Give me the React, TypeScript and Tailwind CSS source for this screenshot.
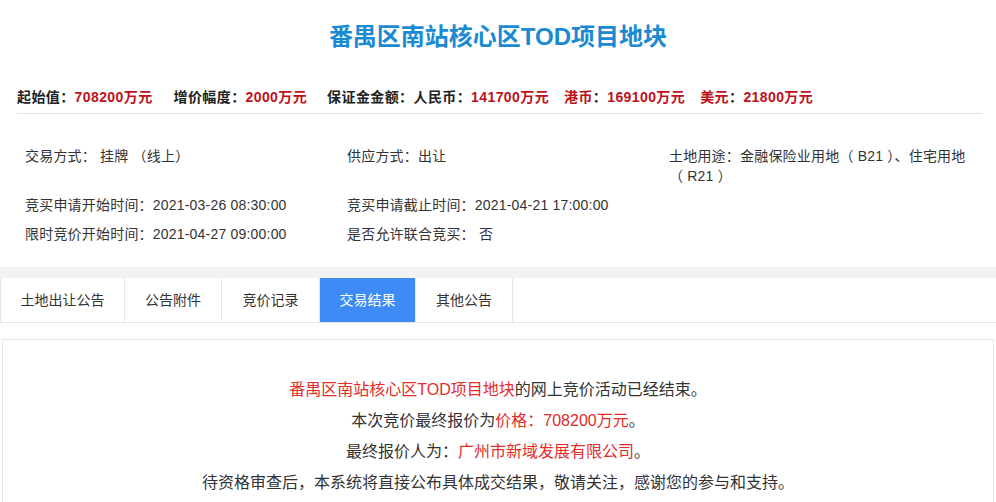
import React from "react";

const font = { fontFamily: '"Liberation Sans","Noto Sans CJK SC",sans-serif' };

function Info({ label, value, className = "" }: { label: string; value: string; className?: string }) {
  return (
    <span className={className}>
      <span className="text-[#222]">{label}：</span>
      <span className="text-[#c0101a]">{value}</span>
    </span>
  );
}

export default function App() {
  const tabs = ["土地出让公告", "公告附件", "竞价记录", "交易结果", "其他公告"];
  const widths = ["w-[125px]", "w-[97px]", "w-[98px]", "w-[96px]", "w-[97px]"];
  return (
    <div className="w-[996px] bg-white text-[#333]" style={font}>
      <div className="h-[74px] flex items-center justify-center">
        <h1 className="text-[24px] font-bold text-[#1a8ad2] leading-[32px]">番禺区南站核心区TOD项目地块</h1>
      </div>
      <div className="ml-[17px] mr-[14px] pt-[13px] pb-[6px] border-b border-[#e2e2e2] text-[14px] font-bold leading-[20px] tracking-[0.4px] flex">
        <Info label="起始值" value="708200万元" className="mr-[21px]" />
        <Info label="增价幅度" value="2000万元" className="mr-[20px]" />
        <span className="text-[#222]">保证金金额：</span>
        <Info label="人民币" value="141700万元" className="mr-[15px]" />
        <span className="mr-[15px] text-[#c0101a]">港币<span className="text-[#222]">：</span>169100万元</span>
        <span className="text-[#c0101a]">美元<span className="text-[#222]">：</span>21800万元</span>
      </div>
      <div className="ml-[25px] mr-[14px] pt-[32px] pb-[23px] grid grid-cols-[322px_322px_1fr] gap-y-[9px] text-[14px] leading-[20px] tracking-[0.2px] text-[#333]">
        <div>交易方式： 挂牌 （线上）</div>
        <div>供应方式：出让</div>
        <div>
          土地用途：金融保险业用地（ B21 ）、住宅用地
          <br />
          （ R21 ）
        </div>
        <div>竞买申请开始时间：2021-03-26 08:30:00</div>
        <div>竞买申请截止时间：2021-04-21 17:00:00</div>
        <div></div>
        <div>限时竞价开始时间：2021-04-27 09:00:00</div>
        <div>是否允许联合竞买： 否</div>
        <div></div>
      </div>
      <div className="h-[11px] bg-[#f2f2f2]"></div>
      <div className="h-[45px] flex border-b border-[#e3e3e3] bg-white">
        {tabs.map((t, i) => (
          <div
            key={t}
            className={
              widths[i] +
              " h-full flex items-center justify-center text-[14px] border-r border-[#e8e8e8] " +
              (i === 0 ? "border-l " : "") +
              (i === 3 ? "bg-[#3d8bf4] text-white" : "text-[#333]")
            }
          >
            {t}
          </div>
        ))}
      </div>
      <div className="h-[16px]"></div>
      <div className="ml-[2px] mr-[2px] border-t border-l border-r border-[#e6e6e6] pt-[34px] pb-[20px] text-center text-[16px] leading-[31px] text-[#333]">
        <p>
          <span className="text-[#e62b2b]">番禺区南站核心区TOD项目地块</span>的网上竞价活动已经结束。
        </p>
        <p>
          本次竞价最终报价为<span className="text-[#e62b2b]">价格：708200万元</span>。
        </p>
        <p>
          最终报价人为：<span className="text-[#e62b2b]">广州市新域发展有限公司</span>。
        </p>
        <p>待资格审查后，本系统将直接公布具体成交结果，敬请关注，感谢您的参与和支持。</p>
      </div>
    </div>
  );
}
